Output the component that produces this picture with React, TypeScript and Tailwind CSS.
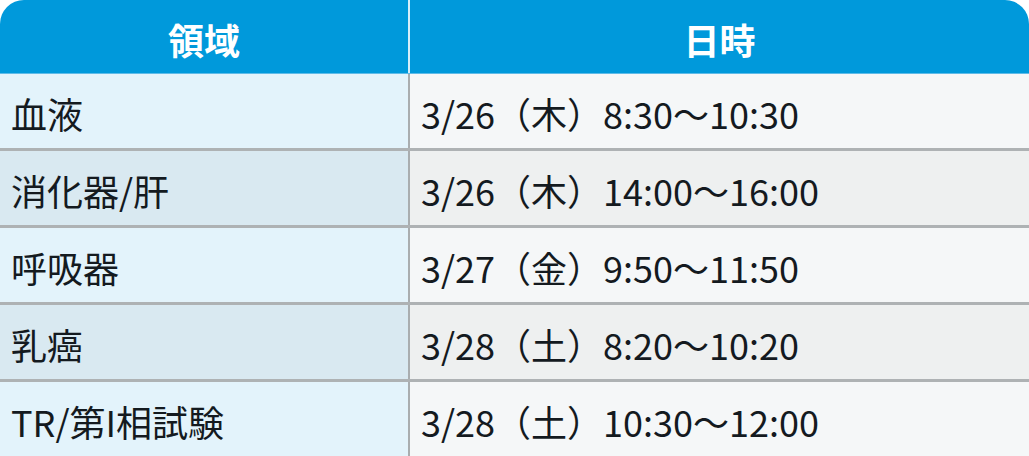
const rows = [
  { area: "血液", date: "3/26（木）8:30〜10:30" },
  { area: "消化器/肝", date: "3/26（木）14:00〜16:00" },
  { area: "呼吸器", date: "3/27（金）9:50〜11:50" },
  { area: "乳癌", date: "3/28（土）8:20〜10:20" },
  { area: "TR/第I相試験", date: "3/28（土）10:30〜12:00" },
];

export default function App() {
  return (
    <div
      className="flex h-[456px] w-[1029px] flex-col overflow-hidden rounded-t-[24px] text-[#141a1f]"
      style={{ fontFamily: '"Noto Sans CJK JP", "Noto Sans", sans-serif' }}
    >
      <div className="flex h-[74px] shrink-0 border-b border-[#5fbbe8] bg-[#0099db] text-[36px] font-bold text-white">
        <div className="flex w-[408px] items-center justify-center pt-[4px]">領域</div>
        <div className="w-[2px] bg-[#d8eef9]" />
        <div className="flex flex-1 items-center justify-center pt-[4px]">日時</div>
      </div>
      {rows.map((row, i) => (
        <div
          key={row.area}
          className={`flex h-[74px] shrink-0 text-[36px] ${i > 0 ? "h-[77px] border-t-[3px] border-[#aeb2b4]" : ""} ${i === rows.length - 1 ? "flex-1" : ""}`}
        >
          <div
            className={`flex w-[408px] items-center pl-[11px] pt-[4px] ${i % 2 === 0 ? "bg-[#e3f3fb]" : "bg-[#d9e9f1]"}`}
          >
            {row.area}
          </div>
          <div className="w-[2px] bg-[#a9adaf]" />
          <div
            className={`flex flex-1 items-center pl-[11px] pt-[4px] ${i % 2 === 0 ? "bg-[#f5f7f8]" : "bg-[#eef0f0]"}`}
          >
            {row.date}
          </div>
        </div>
      ))}
    </div>
  );
}
